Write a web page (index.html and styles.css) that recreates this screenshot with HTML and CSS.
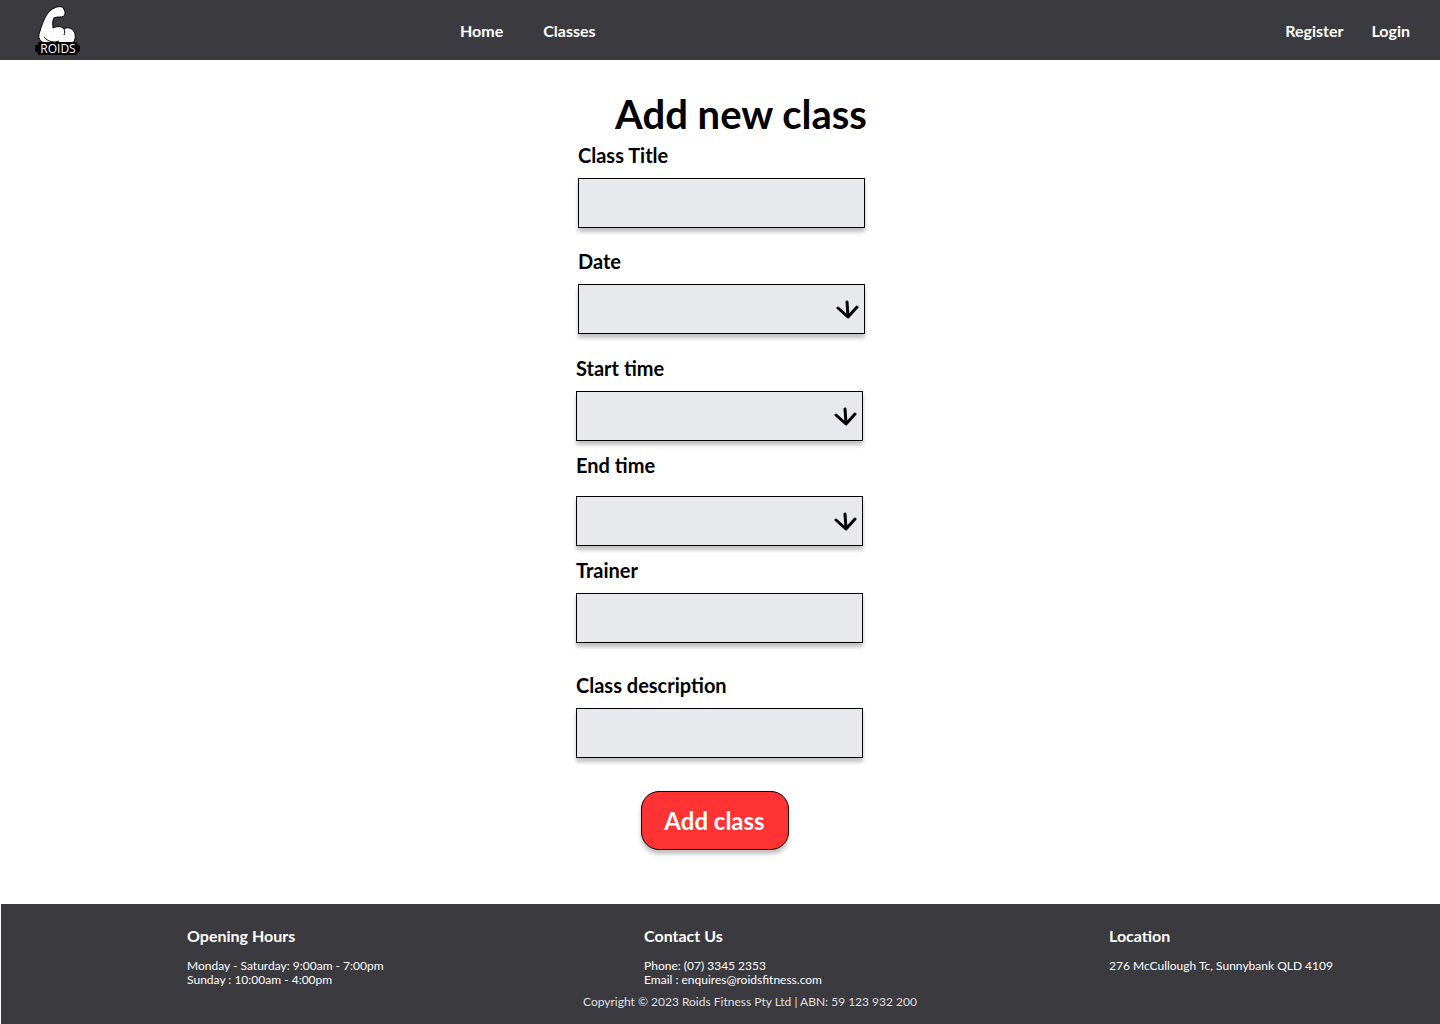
FILE: index.html
```html
<!DOCTYPE html>
<html lang="en">
<head>
<meta charset="utf-8">
<meta name="viewport" content="width=device-width, initial-scale=1">
<title>Add new class - Roids Fitness</title>
<link rel="stylesheet" href="styles.css">
</head>
<body>
<header class="site-header">
  <a class="logo" href="#" aria-label="Roids Fitness">
    <svg width="47" height="50" viewBox="0 0 47 50">
      <path d="M10 38C4 35 4 31 6 26C9 16 12 9 17 5C21 2 25 1 28 2C31 4 32 9 30 11C27 13 24 11 20 13C18 16 19 20 19 23C23 21 28 21 30 24C34 21 40 24 41 29C42 34 40 38 36 39L12 39Z" fill="#fff" stroke="#000" stroke-width="1"/>
      <path d="M10 32C14 37 20 38 25 36M30 24C31 26 31 28 30 30" fill="none" stroke="#000" stroke-width="1"/>
      <path d="M4 37H43V39L46 41V46L43 48V50H4V48L1 46V41L4 39Z" fill="#000"/>
      <text x="24" y="48" text-anchor="middle" class="logo-text">ROIDS</text>
    </svg>
  </a>
  <nav class="main-nav">
    <a href="#">Home</a>
    <a href="#">Classes</a>
  </nav>
  <nav class="account-nav">
    <a href="#">Register</a>
    <a href="#">Login</a>
  </nav>
</header>

<main class="page">
  <h1 class="page-title">Add new class</h1>
  <form class="class-form">
    <div class="field field-end">
      <label for="title">Class Title</label>
      <input class="control" id="title" type="text">
    </div>
    <div class="field field-end field-date">
      <label for="date">Date</label>
      <div class="picker">
        <select class="control" id="date"><option></option></select>
        <svg class="arrow" width="24" height="20" viewBox="0 0 24 20"><path d="M2 9L12 18L21 8M12 17L11 3"/></svg>
      </div>
    </div>
    <div class="field field-tight">
      <label for="start">Start time</label>
      <div class="picker">
        <select class="control" id="start"><option></option></select>
        <svg class="arrow" width="24" height="20" viewBox="0 0 24 20"><path d="M2 9L12 18L21 8M12 17L11 3"/></svg>
      </div>
    </div>
    <div class="field field-tight field-spaced">
      <label for="end">End time</label>
      <div class="picker">
        <select class="control" id="end"><option></option></select>
        <svg class="arrow" width="24" height="20" viewBox="0 0 24 20"><path d="M2 9L12 18L21 8M12 17L11 3"/></svg>
      </div>
    </div>
    <div class="field field-loose">
      <label for="trainer">Trainer</label>
      <input class="control" id="trainer" type="text">
    </div>
    <div class="field field-last">
      <label for="description">Class description</label>
      <input class="control" id="description" type="text">
    </div>
    <button class="submit" type="submit">Add class</button>
  </form>
</main>

<footer class="site-footer">
  <div class="footer-columns">
    <section>
      <h2>Opening Hours</h2>
      <p>Monday - Saturday: 9:00am - 7:00pm<br>Sunday : 10:00am - 4:00pm</p>
    </section>
    <section>
      <h2>Contact Us</h2>
      <p>Phone: (07) 3345 2353<br>Email : enquires@roidsfitness.com</p>
    </section>
    <section>
      <h2>Location</h2>
      <p>276 McCullough Tc, Sunnybank QLD 4109</p>
    </section>
  </div>
  <p class="copyright">Copyright © 2023 Roids Fitness Pty Ltd | ABN: 59 123 932 200</p>
</footer>
</body>
</html>
```
FILE: styles.css
```css
* {
  box-sizing: border-box;
}

body {
  display: flex;
  flex-direction: column;
  min-height: 100vh;
  margin: 0;
  background: #fff;
  color: #000;
  font-family: Lato, "Open Sans", sans-serif;
}

h1,
h2,
p {
  margin: 0;
}

.site-header {
  display: flex;
  align-items: center;
  min-height: 60px;
  padding: 0 30px 0 34px;
  background: #3a3a3f;
  font-size: 16px;
  font-weight: 700;
  line-height: 20px;
}

.site-header a {
  color: #fff;
  text-decoration: none;
}

.logo {
  flex: 0 0 426px;
}

.logo svg {
  display: block;
  overflow: visible;
}

.logo-text {
  fill: #fff;
  font-family: "Open Sans", sans-serif;
  font-size: 12px;
  font-weight: 500;
}

.main-nav,
.account-nav {
  display: flex;
  padding-top: 2px;
}

.main-nav {
  gap: 40px;
}

.account-nav {
  gap: 28px;
  margin-left: auto;
}

.page {
  flex: 1;
  padding: 30px 16px 54px;
}

.page-title {
  padding-left: 42px;
  font-size: 40px;
  font-weight: 700;
  line-height: 48px;
  text-align: center;
}

.class-form {
  display: flex;
  flex-direction: column;
  align-items: flex-start;
  width: 290px;
  margin: 5px auto 0;
  padding-left: 1px;
}

.field {
  display: flex;
  flex-direction: column;
  gap: 11px;
  width: 287px;
  margin-bottom: 21px;
}

.field-end {
  align-self: flex-end;
}

.field-date {
  margin-bottom: 22px;
}

.field-tight {
  margin-bottom: 12px;
}

.field-spaced {
  gap: 19px;
}

.field-loose {
  margin-bottom: 30px;
}

.field-last {
  margin-bottom: 33px;
}

.field label {
  font-size: 20px;
  font-weight: 700;
  line-height: 24px;
}

.control {
  appearance: none;
  width: 100%;
  height: 50px;
  margin: 0;
  padding: 0 12px;
  border: 1px solid #000;
  border-radius: 0;
  background: #e8e9ed;
  box-shadow: 0 4px 4px rgba(0, 0, 0, 0.25);
  color: #000;
  font: inherit;
  font-size: 16px;
}

.picker {
  display: grid;
  align-items: center;
}

.picker > * {
  grid-area: 1 / 1;
}

.arrow {
  z-index: 1;
  justify-self: end;
  margin-right: 5px;
  fill: none;
  stroke: #000;
  stroke-width: 3;
  stroke-linecap: round;
  stroke-linejoin: round;
  pointer-events: none;
}

.submit {
  align-self: center;
  width: 148px;
  height: 59px;
  margin: 0 12px 0 0;
  padding: 0;
  border: 1px solid #000;
  border-radius: 18px;
  background: #ff3333;
  box-shadow: 0 4px 4px rgba(0, 0, 0, 0.25);
  color: #fff;
  font-family: inherit;
  font-size: 24px;
  font-weight: 700;
  line-height: 28px;
}

.site-footer {
  margin-left: 1px;
  padding: 22px 0 15px;
  background: #3a3a3f;
  color: #fff;
  font-size: 12px;
  line-height: 14px;
}

.footer-columns {
  display: grid;
  grid-template-columns: 457fr 465fr 331fr;
  min-height: 61px;
  padding-left: calc(13% - 1px);
}

.site-footer h2 {
  margin-bottom: 13px;
  font-size: 16px;
  font-weight: 700;
  line-height: 20px;
}

.copyright {
  margin-top: 8px;
  padding-left: 59px;
  color: #e0e0e0;
  text-align: center;
}
```
